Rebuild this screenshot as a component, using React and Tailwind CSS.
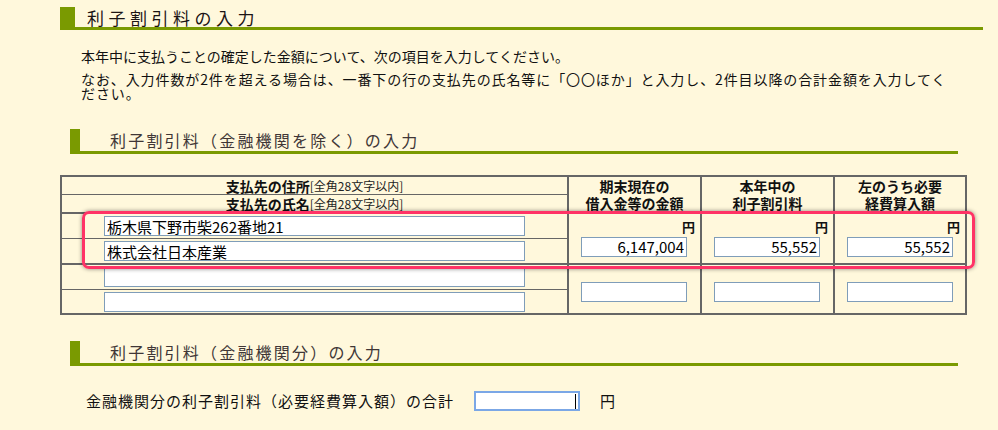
import React from 'react';

const FONT = { fontFamily: '"Noto Sans CJK JP", "Noto Sans", sans-serif' };

const field = 'h-[20px] bg-white border border-[#7f9db9] text-[15px] leading-[18px] text-black outline-none';

function Heading({ children, big }) {
  if (big) {
    return (
      <div className="ml-[60px] mt-[7px] flex h-[23px] w-[923px] items-center border-b-[3px] border-l-[15px] border-[#7a9a01] pl-[12px]">
        <span className="text-[17px] leading-[17px] tracking-[4.5px] text-[#1c1414]">{children}</span>
      </div>
    );
  }
  return (
    <div className="ml-[70px] flex h-[25px] w-[888px] items-center border-b-[3px] border-l-[10px] border-[#7a9a01] pl-[30px]">
      <span className="text-[16px] leading-[16px] tracking-[2.2px] text-[#403636]">{children}</span>
    </div>
  );
}

function AmountCol({ value, last }) {
  return (
    <div className={`flex flex-col border-l-2 border-[#666] ${last ? 'w-[132px]' : 'w-[133px]'}`}>
      <div className="h-[51px] border-b-2 border-[#666] pt-[6px]">
        <div className="pr-[5px] text-right text-[13px] font-bold leading-[14px] text-[#111]">円</div>
        <input
          readOnly
          value={value}
          className={`${field} ml-[12px] mt-[2px] w-[106px] px-[2px] text-right`}
        />
      </div>
      <div className="h-[48px] pt-[14px]">
        <input readOnly value="" className={`${field} ml-[12px] w-[106px]`} />
      </div>
    </div>
  );
}

export default function App() {
  const amountHeads = [
    ['期末現在の', '借入金等の金額'],
    ['本年中の', '利子割引料'],
    ['左のうち必要', '経費算入額'],
  ];
  const values = ['6,147,004', '55,552', '55,552'];

  return (
    <div className="h-[430px] w-[998px] overflow-hidden bg-[#fff8dc] text-[#111]" style={FONT}>
      <Heading big>利子割引料の入力</Heading>

      <div className="ml-[81px] mt-[19px] text-[14px] leading-[14px] text-[#111]">
        <div className="whitespace-nowrap">本年中に支払うことの確定した金額について、次の項目を入力してください。</div>
        <div className="mt-[9px] whitespace-nowrap tracking-[0.9px]">
          なお、入力件数が2件を超える場合は、一番下の行の支払先の氏名等に「〇〇ほか」と入力し、2件目以降の合計金額を入力してく
          <br />
          ださい。
        </div>
      </div>

      <div className="mt-[29px]">
        <Heading>利子割引料（金融機関を除く）の入力</Heading>
      </div>

      <div className="relative ml-[60px] mt-[21px] w-[907px]">
        <div className="flex border-2 border-[#666]">
          <div className="flex w-[505px] flex-col">
            <div className="flex h-[18px] items-center justify-center border-b border-[#666] text-[14px] font-bold leading-none">
              支払先の住所<span className="text-[12px] font-normal text-[#222]">[全角28文字以内]</span>
            </div>
            <div className="flex h-[19px] items-center justify-center border-b-2 border-[#666] text-[14px] font-bold leading-none">
              支払先の氏名<span className="text-[12px] font-normal text-[#222]">[全角28文字以内]</span>
            </div>
            <div className="flex h-[25px] items-center border-b border-[#666]">
              <input readOnly value="栃木県下野市柴262番地21" className={`${field} ml-[42px] w-[421px] px-[2px]`} />
            </div>
            <div className="flex h-[26px] items-center border-b-2 border-[#666]">
              <input readOnly value="株式会社日本産業" className={`${field} ml-[42px] w-[421px] px-[2px]`} />
            </div>
            <div className="flex h-[25px] items-center border-b border-[#666]">
              <input readOnly value="" className={`${field} ml-[42px] w-[421px]`} />
            </div>
            <div className="flex h-[23px] items-center">
              <input readOnly value="" className={`${field} ml-[42px] w-[421px]`} />
            </div>
          </div>

          {amountHeads.map((lines, i) => (
            <div key={i} className="flex flex-col">
              <div
                className={`flex h-[37px] flex-col items-center justify-center border-b-2 border-l-2 border-[#666] text-[14px] font-bold leading-[17px] ${
                  i === 2 ? 'w-[132px]' : 'w-[133px]'
                }`}
              >
                <span>{lines[0]}</span>
                <span>{lines[1]}</span>
              </div>
              <AmountCol value={values[i]} last={i === 2} />
            </div>
          ))}
        </div>

        <div className="absolute left-[22px] top-[36px] h-[58px] w-[893px] rounded-[7px] border-[3px] border-[#ff3366] shadow-[0_0_4px_rgba(0,0,0,0.45)]" />
      </div>

      <div className="mt-[26px]">
        <Heading>利子割引料（金融機関分）の入力</Heading>
      </div>

      <div className="ml-[86px] mt-[25px] flex h-[20px] items-center">
        <span className="w-[388px] whitespace-nowrap text-[15px] leading-[20px] tracking-[1px] text-[#111]">
          金融機関分の利子割引料（必要経費算入額）の合計
        </span>
        <div className="flex h-[20px] w-[106px] items-center justify-end border-2 border-[#7ba7e6] bg-white pr-[2px]">
          <div className="h-[15px] w-px bg-black" />
        </div>
        <span className="ml-[20px] text-[15px] leading-[20px] text-[#111]">円</span>
      </div>
    </div>
  );
}
